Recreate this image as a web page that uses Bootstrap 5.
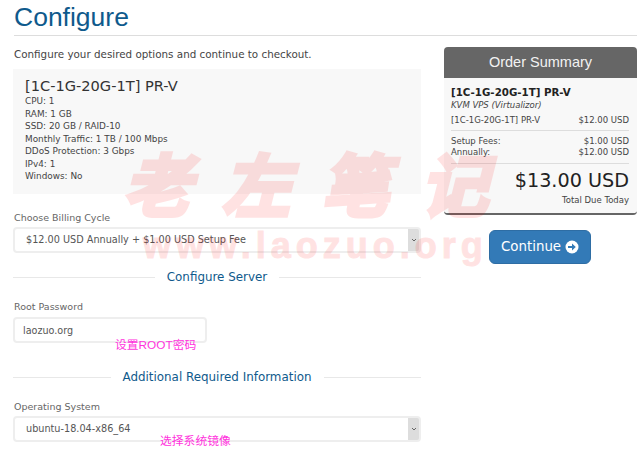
<!DOCTYPE html>
<html lang="en">
<head>
  <meta charset="UTF-8">
  <meta name="viewport" content="width=device-width, initial-scale=1.0">
  <title>Configure</title>
  <link href="https://cdn.jsdelivr.net/npm/bootstrap@5.3.0/dist/css/bootstrap.min.css" rel="stylesheet">
  <script src="https://cdn.jsdelivr.net/npm/bootstrap@5.3.0/dist/js/bootstrap.bundle.min.js"></script>
  <style>
    html, body { height: 453px; overflow: hidden; }
    body { position: relative; font-family: "DejaVu Sans", Verdana, sans-serif; font-size: 9.5px; color: #444; background: #fff; }
    .page-wrap { padding: 0 4px 0 14px; }
    .page-title { font-family: "Liberation Sans", Arial, sans-serif; font-size: 26.5px; line-height: 34px; height: 36px; margin: 0; color: #0f5a8c; border-bottom: 1px solid #ddd; }
    .main-col { width: 408px; margin-left: -1px; }
    .side-col { width: 193px; margin-left: 23px; }
    .intro { font-size: 10.35px; line-height: 14px; margin: 11px 0 8px 1px; color: #444; }
    .product-box { background: #f8f8f8; height: 125px; padding: 8px 12px; }
    .product-box h2 { font-size: 14.6px; line-height: 17px; margin: 0 0 1px; font-family: "DejaVu Sans", sans-serif; color: #333; font-weight: 400; }
    .product-box div { font-size: 8.9px; line-height: 12.5px; color: #444; }
    .field-label { line-height: 12px; margin: 0 0 3px; padding-left: 1px; color: #666; display: block; }
    .label-billing { margin-top: 18px; }
    .label-root { margin-top: 17px; margin-bottom: 4px; }
    .label-os { margin-top: 17px; }
    .pick { height: 26px; padding: 0 20px 0 11px; font-size: 9.7px; color: #555; border: 2px solid #eee; border-radius: 4px;
      background-color: #fff; background-origin: border-box; background-position: right 3px center, right 0 center; background-repeat: no-repeat;
      background-size: 8px 8px, 13px 100%;
      background-image: url("data:image/svg+xml,%3Csvg xmlns='http://www.w3.org/2000/svg' viewBox='0 0 8 8'%3E%3Cpath d='M2 3l2 2 2-2' fill='none' stroke='%23666'/%3E%3C/svg%3E"), linear-gradient(#ddd, #ddd); }
    .sect-head { display: flex; align-items: center; gap: 12px; font-size: 11.9px; line-height: 14px; color: #0f5a8c; }
    .sect-head::before, .sect-head::after { content: ""; flex: 1; border-top: 1px solid #e8e8e8; }
    .sect-server { margin-top: 17px; }
    .sect-extra { margin-top: 27px; }
    .text-field { width: 194px; height: 26px; padding: 0 8px; font-size: 9.6px; color: #555; border: 2px solid #eee; border-radius: 4px; }
    .summary { margin-top: 11px; height: 168px; background: #f8f8f8; border-bottom: 2px solid #666; border-radius: 4px; overflow: hidden; }
    .summary-head { background: #666; color: #f2f2f2; height: 31px; font-family: "Liberation Sans", Arial, sans-serif; font-size: 14.5px; line-height: 31px; text-align: center; }
    .summary-body { padding: 8px 8px 0 7px; font-size: 8.5px; color: #444; }
    .summary-body h3 { font-size: 10.25px; font-weight: 700; line-height: 12px; margin: 0 0 1px; color: #222; font-family: "DejaVu Sans", sans-serif; }
    .sum-sub { font-style: italic; line-height: 12px; margin-bottom: 4px; }
    .sum-row { line-height: 11.5px; }
    .sum-item { padding-bottom: 3px; }
    .sum-fees { padding-top: 5px; }
    .sum-last { padding-bottom: 4px; }
    .sum-sep { border-top: 1px solid #ddd; }
    .sum-total { font-size: 19.2px; line-height: 24px; color: #222; text-align: right; margin-top: 5px; }
    .sum-due { line-height: 12px; margin-top: 1px; }
    .continue-btn { margin: 15px 0 0 45px; width: 102px; height: 34px; padding: 0; background: #337ab7; border-color: #2e6da4; font-size: 13.4px; font-family: "DejaVu Sans", sans-serif; }
    .stamp { position: absolute; pointer-events: none; color: #ff0000; opacity: .11; font-weight: 700; white-space: nowrap; }
    .stamp-cn { left: 123px; top: 136px; font-family: "Noto Sans CJK SC", sans-serif; font-size: 68px; line-height: 92px; letter-spacing: 31px; font-style: italic; -webkit-text-stroke: 4px #ff0000; }
    .stamp-url { left: 143px; top: 226px; font-family: "Liberation Sans", sans-serif; font-size: 36px; line-height: 40px; letter-spacing: 5px; -webkit-text-stroke: 1px #ff0000; }
    .note { position: absolute; color: #ff33dd; font-size: 11.8px; line-height: 14px; font-family: "Liberation Sans", "Noto Sans CJK SC", sans-serif; white-space: nowrap; }
    .note-root { left: 115px; top: 338px; }
    .note-os { left: 160px; top: 434px; }
  </style>
</head>
<body>
<div class="page-wrap">
  <h1 class="page-title">Configure</h1>
  <div class="d-flex">
    <div class="main-col">
      <p class="intro">Configure your desired options and continue to checkout.</p>
      <div class="product-box">
        <h2>[1C-1G-20G-1T] PR-V</h2>
        <div>CPU: 1</div>
        <div>RAM: 1 GB</div>
        <div>SSD: 20 GB / RAID-10</div>
        <div>Monthly Traffic: 1 TB / 100 Mbps</div>
        <div>DDoS Protection: 3 Gbps</div>
        <div>IPv4: 1</div>
        <div>Windows: No</div>
      </div>

      <label class="field-label label-billing">Choose Billing Cycle</label>
      <select class="form-select pick">
        <option>$12.00 USD Annually + $1.00 USD Setup Fee</option>
      </select>

      <div class="sect-head sect-server"><span>Configure Server</span></div>

      <label class="field-label label-root">Root Password</label>
      <input class="form-control text-field" type="text" value="laozuo.org">

      <div class="sect-head sect-extra"><span>Additional Required Information</span></div>

      <label class="field-label label-os">Operating System</label>
      <select class="form-select pick">
        <option>ubuntu-18.04-x86_64</option>
      </select>
    </div>

    <div class="side-col">
      <div class="summary">
        <div class="summary-head">Order Summary</div>
        <div class="summary-body">
          <h3>[1C-1G-20G-1T] PR-V</h3>
          <div class="sum-sub">KVM VPS (Virtualizor)</div>
          <div class="d-flex justify-content-between sum-row sum-item"><span>[1C-1G-20G-1T] PR-V</span><span>$12.00 USD</span></div>
          <div class="sum-sep"></div>
          <div class="d-flex justify-content-between sum-row sum-fees"><span>Setup Fees:</span><span>$1.00 USD</span></div>
          <div class="d-flex justify-content-between sum-row sum-last"><span>Annually:</span><span>$12.00 USD</span></div>
          <div class="sum-sep"></div>
          <div class="sum-total">$13.00 USD</div>
          <div class="text-end sum-due">Total Due Today</div>
        </div>
      </div>
      <button class="btn btn-primary continue-btn d-flex align-items-center justify-content-center gap-1" type="button">
        Continue
        <svg width="14" height="14" viewBox="0 0 14 14"><circle cx="7" cy="7" r="6.5" fill="#fff"/><path d="M3 6h4V3.6L10.8 7 7 10.4V8H3z" fill="#337ab7"/></svg>
      </button>
    </div>
  </div>
</div>

<div class="stamp stamp-cn">老左笔记</div>
<div class="stamp stamp-url">www.laozuo.org</div>
<div class="note note-root">设置ROOT密码</div>
<div class="note note-os">选择系统镜像</div>
</body>
</html>
